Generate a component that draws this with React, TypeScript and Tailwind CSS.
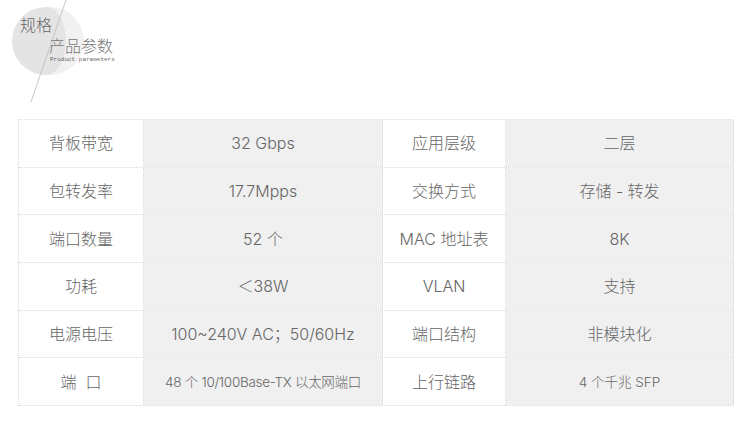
const rows: [string, string, string, string, boolean?][] = [
  ["背板带宽", "32 Gbps", "应用层级", "二层"],
  ["包转发率", "17.7Mpps", "交换方式", "存储 - 转发"],
  ["端口数量", "52 个", "MAC 地址表", "8K"],
  ["功耗", "＜38W", "VLAN", "支持"],
  ["电源电压", "100~240V AC；50/60Hz", "端口结构", "非模块化"],
  ["端  口", "48 个 10/100Base-TX 以太网端口", "上行链路", "4 个千兆 SFP", true],
];

const Deco = () => (
  <svg className="absolute left-0 top-0" width="120" height="105" viewBox="0 0 120 105">
    <circle cx="50" cy="41" r="34" fill="#f1f1f1" />
    <path d="M46 7 A34 34 0 0 0 46 75 A20 34 0 0 0 46 7Z" fill="#e4e4e4" />
    <line x1="66" y1="0" x2="31" y2="102" stroke="#bbb" strokeWidth="0.8" />
  </svg>
);

const App = () => {
  return (
    <div
      className="w-[750px] h-[422px] bg-white text-[#666] font-light"
      style={{ fontFamily: 'Inter, "Noto Sans CJK SC", sans-serif' }}
    >
      <div className="relative h-[119px]">
        <Deco />
        <div className="relative pl-[20px] pt-[14px]">
          <div className="text-[16px] leading-[22px] text-[#666]">规格</div>
          <div className="pl-[29px] text-[16px] leading-[20px] text-[#777]">产品参数</div>
          <div
            className="pl-[30px] text-[6px] leading-[7px] text-[#666] font-normal"
            style={{ fontFamily: '"Liberation Mono", monospace' }}
          >
            Product parameters
          </div>
        </div>
      </div>

      <div className="ml-[18px] w-[715px] border-l border-t border-dotted border-[#d8d8d8]">
        {rows.map(([a, b, c, d, small], i) => (
          <div
            key={i}
            className="grid grid-cols-[125px_239px_123px_228px] h-[47.7px] border-b border-dotted border-[#d8d8d8] text-[16px]"
          >
            <div className="flex items-center justify-center border-r border-dotted border-[#d8d8d8] whitespace-pre">
              {a}
            </div>
            <div
              className={`flex items-center justify-center bg-[#f0f0f0] border-r border-dotted border-[#d8d8d8] whitespace-nowrap ${
                small ? "text-[13.5px] tracking-[-0.3px]" : ""
              }`}
            >
              {b}
            </div>
            <div className="flex items-center justify-center border-r border-dotted border-[#d8d8d8]">
              {c}
            </div>
            <div
              className={`flex items-center justify-center bg-[#f0f0f0] border-r border-dotted border-[#d8d8d8] ${
                small ? "text-[13.5px]" : ""
              }`}
            >
              {d}
            </div>
          </div>
        ))}
      </div>
    </div>
  );
};

export default App;
